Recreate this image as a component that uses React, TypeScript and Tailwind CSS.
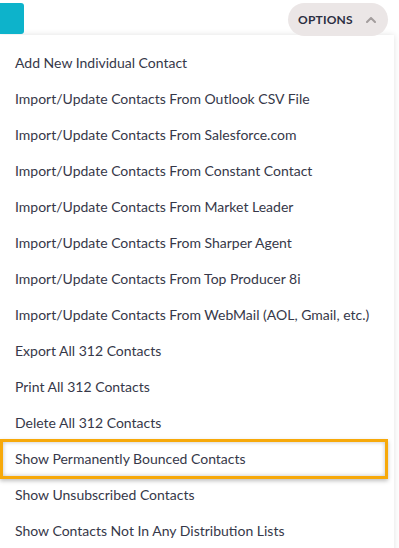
const items = [
  "Add New Individual Contact",
  "Import/Update Contacts From Outlook CSV File",
  "Import/Update Contacts From Salesforce.com",
  "Import/Update Contacts From Constant Contact",
  "Import/Update Contacts From Market Leader",
  "Import/Update Contacts From Sharper Agent",
  "Import/Update Contacts From Top Producer 8i",
  "Import/Update Contacts From WebMail (AOL, Gmail, etc.)",
  "Export All 312 Contacts",
  "Print All 312 Contacts",
  "Delete All 312 Contacts",
  "Show Permanently Bounced Contacts",
  "Show Unsubscribed Contacts",
  "Show Contacts Not In Any Distribution Lists",
];

const App = () => {
  return (
    <div className="w-[399px] h-[548px] overflow-hidden bg-white font-['Lato',sans-serif]">
      <div className="flex justify-between items-start pt-[3px] pr-[11px] h-[35px]">
        <div className="w-[24px] h-[31px] bg-[#0db3cb] rounded-r-[3px]" />
        <button className="w-[100px] h-[33px] rounded-full bg-[#ebe6e6] flex items-center justify-between pl-[10px] pr-[12px]">
          <span className="text-[12px] font-bold tracking-[0.2px] text-[#2b2f42]">OPTIONS</span>
          <svg width="10" height="6" viewBox="0 0 10 6" fill="none">
            <path d="M1 5l4-4 4 4" stroke="#a39d9d" strokeWidth="2" strokeLinecap="round" strokeLinejoin="round" />
          </svg>
        </button>
      </div>
      <div className="w-[394px] h-[600px] bg-white pt-[9px] shadow-[0_0_6px_rgba(0,0,0,0.12)]">
        {items.map((label, i) => (
          <div key={i} className="relative h-[36px] flex items-center pl-[15px]">
            {i === 11 && (
              <div className="absolute left-0 w-[388px] top-[-1px] bottom-[-3px] border-[3px] border-[#f7a90a] shadow-[inset_0_0_4px_rgba(0,0,0,0.25),0_2px_4px_rgba(0,0,0,0.25)]" />
            )}
            <span className="relative text-[14px] text-[#363849]">{label}</span>
          </div>
        ))}
      </div>
    </div>
  );
};

export default App;
